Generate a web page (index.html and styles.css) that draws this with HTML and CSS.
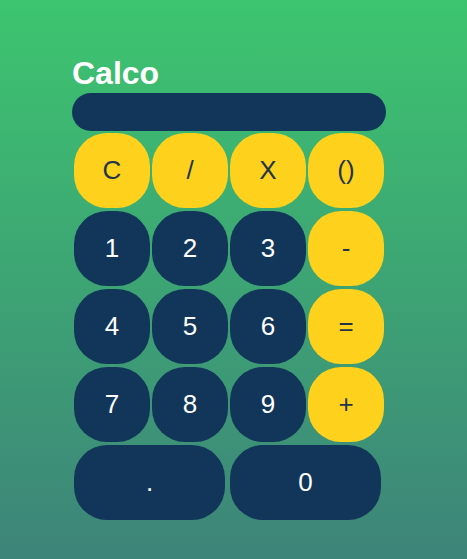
FILE: index.html
```html
<!DOCTYPE html>
<html>
<head>
<meta charset="utf-8">
<title>Calco</title>
<link rel="stylesheet" href="styles.css">
</head>
<body>
<main class="calc">
  <h1 class="title">Calco</h1>
  <div class="display"></div>
  <div class="keys">
    <button class="key op">C</button>
    <button class="key op">/</button>
    <button class="key op">X</button>
    <button class="key op">()</button>
    <button class="key num">1</button>
    <button class="key num">2</button>
    <button class="key num">3</button>
    <button class="key op">-</button>
    <button class="key num">4</button>
    <button class="key num">5</button>
    <button class="key num">6</button>
    <button class="key op">=</button>
    <button class="key num">7</button>
    <button class="key num">8</button>
    <button class="key num">9</button>
    <button class="key op">+</button>
  </div>
  <div class="bottom">
    <button class="key num wide">.</button>
    <button class="key num wide">0</button>
  </div>
</main>
</body>
</html>
```
FILE: styles.css
```css
html, body {
  margin: 0;
  height: 100%;
}
body {
  background: linear-gradient(to bottom, #3dc56f 0%, #3d8479 100%);
  font-family: "Liberation Sans", Arial, sans-serif;
  min-height: 559px;
}
.calc {
  padding: 55px 0 0 72px;
}
.title {
  margin: 0 0 1px 0;
  font-size: 32px;
  font-weight: bold;
  color: #ffffff;
  line-height: 37px;
}
.display {
  width: 314px;
  height: 38px;
  border-radius: 19px;
  background: #12365a;
}
.keys {
  margin: 2px 0 0 2px;
  display: grid;
  grid-template-columns: repeat(4, 76px);
  grid-auto-rows: 75px;
  column-gap: 2px;
  row-gap: 3px;
}
.bottom {
  margin: 3px 0 0 2px;
  display: flex;
  gap: 5px;
}
.key {
  border: none;
  padding: 0;
  margin: 0;
  border-radius: 33px;
  font-family: "Liberation Sans", Arial, sans-serif;
  font-size: 26px;
  display: flex;
  align-items: center;
  justify-content: center;
}
.op {
  background: #fed21c;
  color: #23344a;
}
.num {
  background: #12365a;
  color: #ffffff;
}
.wide {
  width: 151px;
  height: 75px;
  border-radius: 33px;
}
```
